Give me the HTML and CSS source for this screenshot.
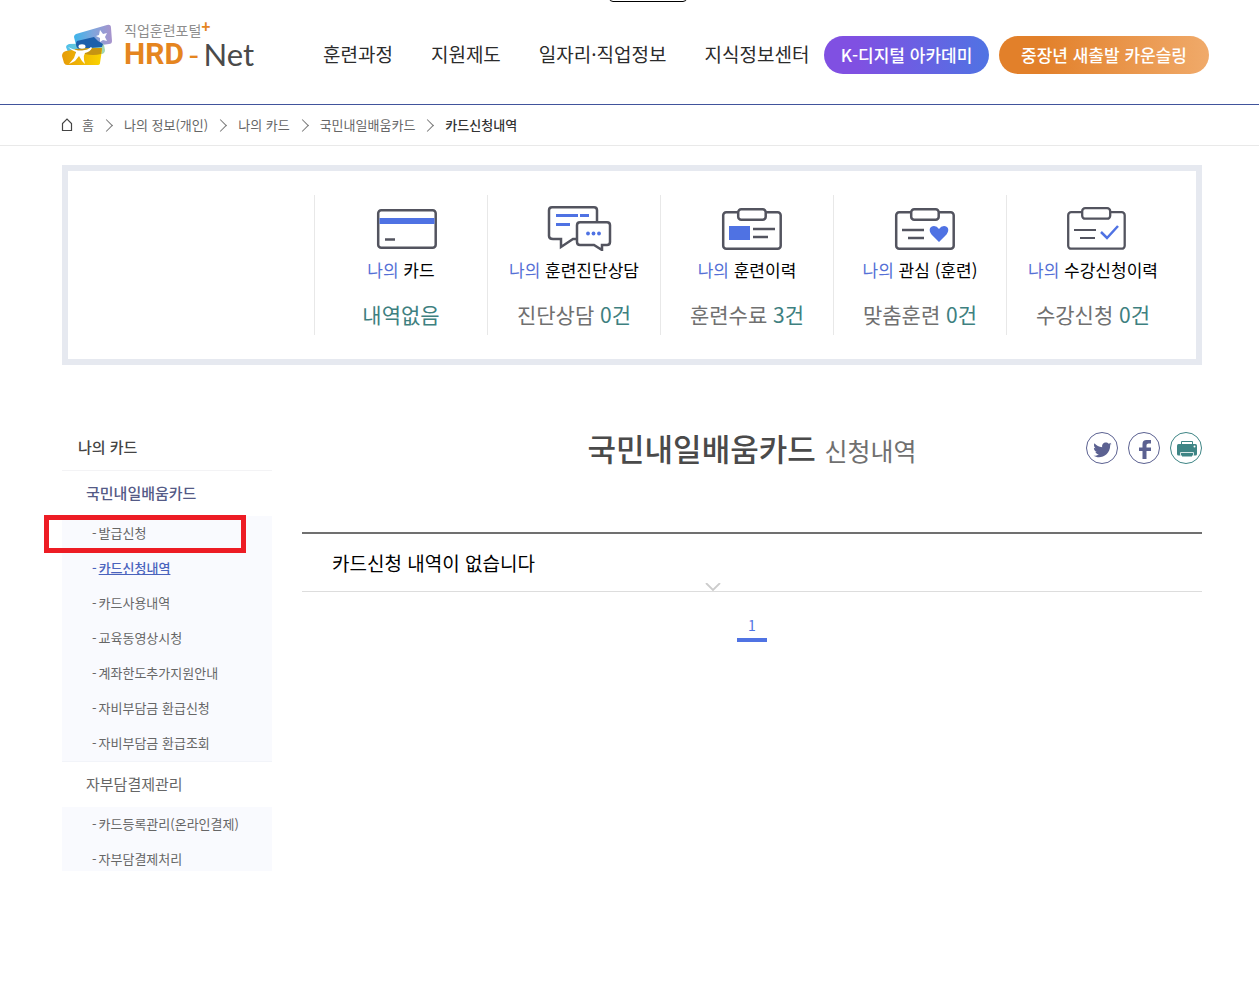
FILE: index.html
```html
<!DOCTYPE html>
<html lang="ko">
<head>
<meta charset="utf-8">
<meta name="viewport" content="width=device-width, initial-scale=1">
<title>HRD-Net 카드신청내역</title>
<link rel="stylesheet" href="styles.css">
</head>
<body>
<div class="top-tab"></div>
<header class="header">
  <a class="logo" href="#">
    <svg class="logo-mark" viewBox="0 0 50 42" width="50" height="42" aria-hidden="true">
      <defs>
        <linearGradient id="sky" x1="0" x2="1"><stop offset="0" stop-color="#3db4ea"/><stop offset=".5" stop-color="#7fa5dc"/><stop offset="1" stop-color="#a893cc"/></linearGradient>
        <linearGradient id="sea" x1="0" x2="1"><stop offset="0" stop-color="#4fc0ea"/><stop offset="1" stop-color="#a4d8b0"/></linearGradient>
        <linearGradient id="sun" x1="0" x2="1"><stop offset="0" stop-color="#e69b08"/><stop offset="1" stop-color="#fad400"/></linearGradient>
      </defs>
      <path d="M14 10 45 1q4-1 4 3l1 13q0 3-3 3L18 24q-3 0-4-3l-2-8q0-2 2-3z" fill="url(#sky)"/>
      <path d="M7 20 38 19q3 0 4 2l1 5q0 3-3 4L11 31q-4 0-5-3l-2-5q0-2 3-3z" fill="url(#sea)"/>
      <path d="M15 17 32 13q4 5 9 7l-1 3-23 2q-3-1-3-5 0-2 1-3z" fill="#1c5fab"/>
      <path d="M4 27q15-3 34-3 2 0 2 2l-2 13q0 2-3 2H5q-2 0-3-2L0 32q0-4 4-5z" fill="url(#sun)"/>
      <path d="M13 25q13-1 27-1l-1 6q-8 2-16 0H13z" fill="#c59412"/>
      <path d="m34 12 3-1 1-5 3 4 4-1-2 4 2 4-4-1-3 2v-4z" fill="#fff"/>
      <ellipse cx="20" cy="22.500" rx="3.500" ry="2.200" fill="#fff"/>
      <path d="M6 23q4 2 10 3.500h4q6-.5 9-3.500l1 1q-2 4-7 5-2 3-1 7l1 4-3-3-3-5-4 5-6 3 5-6 2-6q-5-2-8-5z" fill="#fff"/>
    </svg>
    <span class="logo-text">
      <span class="logo-sub">직업훈련포털<b class="logo-plus">+</b></span>
      <span class="logo-name"><b class="logo-hrd">HRD</b><span class="logo-dash">-</span><span class="logo-net">Net</span></span>
    </span>
  </a>
  <nav class="nav">
    <a href="#">훈련과정</a>
    <a href="#">지원제도</a>
    <a href="#">일자리·직업정보</a>
    <a href="#">지식정보센터</a>
  </nav>
  <div class="promos">
    <a class="promo promo-academy" href="#">K-디지털 아카데미</a>
    <a class="promo promo-counsel" href="#">중장년 새출발 카운슬링</a>
  </div>
</header>

<nav class="crumbs" aria-label="현재 위치">
  <svg class="home" viewBox="0 0 12 14" width="12" height="14" aria-hidden="true"><path d="M1.500 12.500V5.500L6 1l4.500 4.500v7z" fill="none" stroke="#444" stroke-width="1.200"/></svg>
  <ol>
    <li><a href="#">홈</a></li>
    <li><a href="#">나의 정보(개인)</a></li>
    <li><a href="#">나의 카드</a></li>
    <li><a href="#">국민내일배움카드</a></li>
    <li><a class="here" href="#">카드신청내역</a></li>
  </ol>
</nav>

<section class="summary">
  <a class="stat" href="#">
    <svg viewBox="0 0 76 46" width="76" height="46" aria-hidden="true"><g fill="none" stroke="#53545f" stroke-width="2.500"><rect x="15.200" y="5.200" width="57.500" height="37.500" rx="3"/><path d="M22 34.500h10"/></g><path d="M16.500 13h55v6h-55z" fill="#4f72e3"/></svg>
    <span class="stat-name"><em>나의</em> 카드</span>
    <span class="stat-value"><strong>내역없음</strong></span>
  </a>
  <a class="stat" href="#">
    <svg viewBox="0 0 76 46" width="76" height="46" aria-hidden="true"><g fill="#fff" stroke="#53545f" stroke-width="2.500"><path d="M16 2.200h42q3 0 3 3V31q0 3-3 3H37l-12 8v-8h-8q-4 0-4-3V5.200q0-3 3-3z"/><path d="M44 17.200h27q3 0 3 3V37q0 3-3 3h-5v5l-8-5H44q-3 0-3-3V20.200q0-3 3-3z"/></g><path d="M20 10.500h22m2 0h9M20 19.500h14" stroke="#4f72e3" stroke-width="3"/><g fill="#4f72e3"><circle cx="52" cy="28.500" r="1.900"/><circle cx="57.500" cy="28.500" r="1.900"/><circle cx="63" cy="28.500" r="1.900"/></g></svg>
    <span class="stat-name"><em>나의</em> 훈련진단상담</span>
    <span class="stat-value">진단상담 <strong>0건</strong></span>
  </a>
  <a class="stat" href="#">
    <svg viewBox="1 0 76 46" width="76" height="46" aria-hidden="true"><g fill="#fff" stroke="#53545f" stroke-width="2.500"><rect x="15.200" y="7.200" width="57.500" height="36.500" rx="3"/><rect x="30.200" y="4.200" width="27.500" height="10.500" rx="3"/><path d="M45 24h22M45 32h15"/></g><path d="M21 21h21v14H21z" fill="#4f72e3"/></svg>
    <span class="stat-name"><em>나의</em> 훈련이력</span>
    <span class="stat-value">훈련수료 <strong>3건</strong></span>
  </a>
  <a class="stat" href="#">
    <svg viewBox="1 0 76 46" width="76" height="46" aria-hidden="true"><g fill="#fff" stroke="#53545f" stroke-width="2.500"><rect x="15.200" y="7.200" width="57.500" height="36.500" rx="3"/><rect x="30.200" y="4.200" width="27.500" height="10.500" rx="3"/><path d="M21 25h22M27 33h16"/></g><path d="M58 37 50.500 29.500C47 25 49 21 53 21q3 0 5 3 2-3 5-3c4 0 6 4 2.500 8.500z" fill="#4f72e3"/></svg>
    <span class="stat-name"><em>나의</em> 관심 (훈련)</span>
    <span class="stat-value">맞춤훈련 <strong>0건</strong></span>
  </a>
  <a class="stat" href="#">
    <svg viewBox="1 0 76 46" width="76" height="46" aria-hidden="true"><g fill="#fff" stroke="#53545f" stroke-width="2.300"><rect x="14.200" y="7.200" width="56.500" height="36.500" rx="3"/><rect x="28.200" y="3.200" width="28" height="10.500" rx="3"/><path d="M20 25h22M26 33h15" stroke-width="1.800"/></g><path d="m47 27 6 6L64 21" fill="none" stroke="#4f72e3" stroke-width="2.500"/></svg>
    <span class="stat-name"><em>나의</em> 수강신청이력</span>
    <span class="stat-value">수강신청 <strong>0건</strong></span>
  </a>
</section>

<div class="content">
  <aside class="side">
    <h2>나의 카드</h2>
    <h3 class="open"><a href="#">국민내일배움카드</a></h3>
    <ul>
      <li class="marked"><a href="#">발급신청</a></li>
      <li class="current"><a href="#">카드신청내역</a></li>
      <li><a href="#">카드사용내역</a></li>
      <li><a href="#">교육동영상시청</a></li>
      <li><a href="#">계좌한도추가지원안내</a></li>
      <li><a href="#">자비부담금 환급신청</a></li>
      <li><a href="#">자비부담금 환급조회</a></li>
    </ul>
    <h3><a href="#">자부담결제관리</a></h3>
    <ul class="cut">
      <li><a href="#">카드등록관리(온라인결제)</a></li>
      <li><a href="#">자부담결제처리</a></li>
    </ul>
  </aside>

  <main class="main">
    <div class="title-row">
      <h1>국민내일배움카드 <small>신청내역</small></h1>
      <div class="share">
        <button type="button" aria-label="트위터"><svg viewBox="0 0 32 32" width="32" height="32"><path d="M26 11.500l-1.800 1.800c0 8-6 12-11.200 12-2 0-4-.6-5.500-1.500 2 .1 4-.4 5.300-1.500-1.700 0-3-1.100-3.500-2.600h1.600c-1.800-.5-3-2-3-3.800l1.700.4c-1.600-1.200-2-3.200-1.200-5 2 2.300 4.500 3.700 7.800 3.900-.5-2.800 1.300-4.700 3.700-4.700 1.200 0 2.100.5 2.800 1.200l2.500-1-1.400 2.200z" fill="#5b6191"/></svg></button>
        <button type="button" aria-label="페이스북"><svg viewBox="0 0 32 32" width="32" height="32"><path d="M14.500 27v-8H11v-3.500h3.500V12q0-4 4-4H23v3.500h-2.500q-2 0-2 1.500v2.500H23V19h-4.500v8z" fill="#5b6191"/></svg></button>
        <button class="print" type="button" aria-label="인쇄"><svg viewBox="0 0 32 32" width="32" height="32"><path d="M11.500 12V9.500h11V12" fill="none" stroke="#3e8585"/><rect x="7" y="12" width="20" height="11.500" rx="1.500" fill="#3e8585"/><path d="M10.500 24v-3.500h13V24" fill="none" stroke="#d7e6e6"/><path d="M12 21h10v3.500H12z" fill="#3e8585"/><circle cx="24.500" cy="14.500" r="1" fill="#fff"/></svg></button>
      </div>
    </div>
    <div class="result">
      <p>카드신청 내역이 없습니다</p>
      <svg class="chevron" viewBox="0 0 16 8" width="16" height="8" aria-hidden="true"><path d="m1 0 7 7 7-7" fill="none" stroke="#ccc" stroke-width="1.800"/></svg>
    </div>
    <nav class="pages" aria-label="페이지"><a href="#" aria-current="page">1</a></nav>
  </main>
</div>
</body>
</html>
```

FILE: styles.css
```css
* {
  box-sizing: border-box;
}

body {
  margin: 0;
  background: #fff;
  color: #000;
  font-family: "Noto Sans CJK KR", "Noto Sans", sans-serif;
  font-size: 13px;
}

a {
  color: inherit;
  text-decoration: none;
}

h1, h2, h3, p, ul, ol {
  margin: 0;
  padding: 0;
  list-style: none;
}

/* lower edge of the tab tucked above the window */
.top-tab {
  position: absolute;
  top: -20px;
  left: 609px;
  width: 78px;
  height: 22px;
  border: 1px solid #000;
  border-radius: 4px;
}

/* header */
.header {
  display: flex;
  align-items: center;
  height: 105px;
  padding: 6px 50px 0 62px;
  border-bottom: 1px solid #41549c;
}

.logo {
  display: flex;
  gap: 12px;
  width: 261px;
  height: 70px;
}

.logo-mark {
  margin-top: 4px;
}

.logo-text {
  display: flex;
  flex-direction: column;
  white-space: nowrap;
}

.logo-sub {
  display: flex;
  height: 20px;
  color: #8d8d8d;
  font-size: 14px;
  line-height: 20px;
}

.logo-plus {
  color: #e5851f;
  font: 900 16px/12px Lato, sans-serif;
}

.logo-name {
  display: flex;
  font: 300 31px/28px Lato, sans-serif;
}

.logo-hrd {
  color: #e5851f;
  font: 700 30px/28px Roboto, sans-serif;
}

.logo-dash {
  margin: 0 4px;
  color: #e5851f;
  font-weight: 400;
}

.logo-net {
  color: #4a4a4a;
  font-weight: 400;
}

.nav {
  display: flex;
  gap: 38px;
  margin-bottom: 2px;
  color: #2b2b2b;
  font-size: 19px;
  line-height: 28px;
  white-space: nowrap;
}

.promos {
  display: flex;
  gap: 10px;
  margin-left: auto;
}

.promo {
  border-radius: 19px;
  color: #fff;
  font-size: 17px;
  font-weight: 500;
  line-height: 38px;
  text-align: center;
  white-space: nowrap;
}

.promo-academy {
  width: 165px;
  background: linear-gradient(90deg, #8050e2 20%, #5073e3);
}

.promo-counsel {
  width: 210px;
  background: linear-gradient(90deg, #e2802a 20%, #f0aa6a);
}

/* breadcrumb */
.crumbs {
  display: flex;
  align-items: center;
  gap: 9px;
  height: 41px;
  padding: 0 61px;
  border-bottom: 1px solid #e9e9e9;
  color: #666;
}

.crumbs ol {
  display: flex;
  line-height: 20px;
}

.crumbs li {
  display: flex;
  align-items: center;
}

.crumbs li + li::before {
  width: 8px;
  height: 8px;
  margin: 0 13px 0 8px;
  border: solid #777;
  border-width: 1px 1px 0 0;
  content: "";
  transform: rotate(45deg);
}

.crumbs .here {
  color: #333;
  font-weight: 500;
}

/* personal summary */
.summary {
  display: flex;
  justify-content: flex-end;
  margin: 19px 57px 0 62px;
  padding: 24px 17px 24px 0;
  border: 6px solid #e6e9f0;
}

.stat {
  display: flex;
  flex-direction: column;
  align-items: center;
  width: 173px;
  height: 140px;
  padding-top: 10px;
  border-left: 1px solid #e8e8e8;
}

.stat-name {
  margin-top: 7px;
  font-size: 17px;
  line-height: 24px;
}

.stat-name em {
  color: #5570d6;
  font-style: normal;
}

.stat-value {
  margin-top: 17px;
  color: #707070;
  font-size: 21px;
  line-height: 30px;
}

.stat-value strong {
  color: #3e8080;
  font-weight: 400;
}

/* two columns */
.content {
  display: flex;
  gap: 30px;
  padding: 60px 57px 40px 62px;
}

.side {
  flex: 0 0 210px;
  color: #666;
}

.side h2 {
  padding: 0 16px 2px;
  border-bottom: 1px solid #f3f3f5;
  color: #444;
  font-size: 15px;
  font-weight: 500;
  line-height: 43px;
}

.side h3 {
  padding: 0 24px 2px;
  font-size: 15px;
  font-weight: 400;
  line-height: 43px;
}

.side .open {
  color: #545a86;
  font-weight: 500;
}

.side ul {
  border-bottom: 1px solid #f2f4f9;
  background: #f9fafe;
}

.side li {
  padding: 0 0 2px 30px;
  line-height: 33px;
}

.side li::before {
  margin-right: 2px;
  content: "-";
}

.side .cut {
  max-height: 64px;
  border: 0;
  overflow: hidden;
}

.side .current {
  color: #4a63bd;
  font-weight: 500;
}

.side .current a {
  text-decoration: underline;
}

.side .marked {
  position: relative;
}

.side .marked::after {
  position: absolute;
  top: -1px;
  right: 26px;
  bottom: -2px;
  left: -18px;
  border: 5px solid #ed1c24;
  content: "";
}

.main {
  flex: 1;
}

.title-row {
  display: grid;
  grid-template-columns: 1fr auto 1fr;
  align-items: center;
  height: 46px;
}

.title-row h1 {
  grid-column: 2;
  color: #4a4a4a;
  font-size: 31px;
  font-weight: 500;
  line-height: 46px;
}

.title-row small {
  color: #707070;
  font-size: 25px;
  font-weight: 400;
}

.share {
  display: flex;
  justify-content: flex-end;
  gap: 10px;
  margin-bottom: 2px;
}

.share button {
  display: flex;
  align-items: center;
  justify-content: center;
  width: 32px;
  height: 32px;
  padding: 0;
  border: 1px solid #5b6191;
  border-radius: 50%;
  background: none;
}

.share svg {
  flex: none;
}

.share .print {
  border-color: #3e8585;
}

.result {
  position: relative;
  margin-top: 61px;
  padding: 0 30px;
  border-top: 2px solid #707070;
  border-bottom: 1px solid #ddd;
  font-size: 19px;
  line-height: 57px;
}

.chevron {
  position: absolute;
  right: 481px;
  bottom: 0;
}

.pages {
  display: flex;
  justify-content: center;
  margin-top: 20px;
}

.pages a {
  width: 30px;
  border-bottom: 4px solid #5073e3;
  color: #5073e3;
  font-size: 14px;
  line-height: 26px;
  text-align: center;
}
```
